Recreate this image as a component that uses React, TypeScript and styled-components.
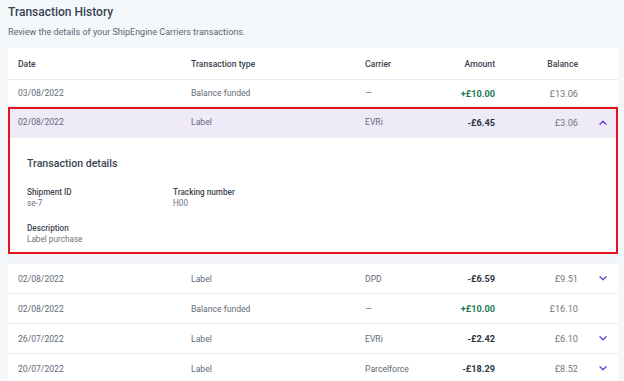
import React from 'react';
import styled, {createGlobalStyle} from 'styled-components';

const GlobalStyle = createGlobalStyle`
    html, body {
        margin: 0;
        padding: 0;
        background: #f5f8fb;
        font-family: 'Roboto', 'Inter', sans-serif;
    }
`;

const COLUMNS = '173px 174px 75px 65px 83px 30px';

const Page = styled.div`
    padding: 0 6px 0 8px;
    width: 624px;
    box-sizing: border-box;
`;

const Title = styled.h1`
    margin: 0;
    padding-top: 4px;
    font-size: 12px;
    font-weight: 500;
    color: #3a4452;
    line-height: 17px;
`;

const SubTitle = styled.p`
    margin: 5px 0 0 0;
    font-size: 9px;
    color: #5d6672;
    line-height: 12px;
`;

const Card = styled.div`
    margin-top: 10px;
    background: #ffffff;
`;

const Row = styled.div<{$height: number; $active?: boolean}>`
    display: grid;
    grid-template-columns: ${COLUMNS};
    align-items: center;
    height: ${p => p.$height}px;
    padding-left: 10px;
    box-sizing: border-box;
    border-bottom: 1px solid #e8ebef;
    background: ${p => (p.$active ? '#efeaf8' : '#ffffff')};
    font-size: 8.6px;
    color: #636b77;
`;

const Head = styled.span<{$align?: string}>`
    font-weight: 500;
    color: #3c4451;
    text-align: ${p => p.$align || 'left'};
    padding-right: ${p => (p.$align === 'right' ? '10px' : '0')};
`;

const Cell = styled.span`
    white-space: nowrap;
`;

const Amount = styled.span<{$positive?: boolean}>`
    text-align: right;
    padding-right: 10px;
    font-weight: 700;
    font-size: 9.2px;
    color: ${p => (p.$positive ? '#1d7a55' : '#2c3440')};
`;

const Balance = styled.span`
    text-align: right;
    padding-right: 10px;
    font-size: 9.2px;
    color: #707884;
`;

const Toggle = styled.span`
    display: flex;
    justify-content: center;
    align-items: center;
    color: #6b3fd4;
`;

const Highlight = styled.div`
    position: relative;
    outline: 2px solid #e3141b;
    outline-offset: -2px;
`;

const Details = styled.div`
    padding: 19px 0 10px 19px;
    background: #ffffff;
`;

const DetailsTitle = styled.h2`
    margin: 0 0 17px 0;
    font-size: 10.6px;
    font-weight: 500;
    color: #3a4452;
`;

const FieldGrid = styled.div`
    display: grid;
    grid-template-columns: 146px 146px;
    row-gap: 15px;
`;

const Field = styled.div`
    display: flex;
    flex-direction: column;
    gap: 1px;
`;

const FieldLabel = styled.span`
    font-size: 8.2px;
    font-weight: 500;
    color: #3f4753;
`;

const FieldValue = styled.span`
    font-size: 8.2px;
    color: #6c7480;
`;

const Spacer = styled.div`
    height: 10px;
    background: #f3f5f8;
`;

const Chevron = ({up}: {up?: boolean}) => (
    <svg width="8" height="5" viewBox="0 0 8 5" fill="none">
        <path
            d={up ? 'M1 4.2L4 1.2L7 4.2' : 'M1 0.8L4 3.8L7 0.8'}
            stroke="currentColor"
            strokeWidth="1.3"
            strokeLinecap="round"
            strokeLinejoin="round"
        />
    </svg>
);

type Tx = {
    date: string;
    type: string;
    carrier: string;
    amount: string;
    balance: string;
    positive?: boolean;
    expandable?: boolean;
};

const after: Tx[] = [
    {date: '02/08/2022', type: 'Label', carrier: 'DPD', amount: '-£6.59', balance: '£9.51', expandable: true},
    {date: '02/08/2022', type: 'Balance funded', carrier: '—', amount: '+£10.00', balance: '£16.10', positive: true},
    {date: '26/07/2022', type: 'Label', carrier: 'EVRi', amount: '-£2.42', balance: '£6.10', expandable: true},
    {date: '20/07/2022', type: 'Label', carrier: 'Parcelforce', amount: '-£18.29', balance: '£8.52', expandable: true},
];

const TxRow = ({tx, height, active}: {tx: Tx; height: number; active?: boolean}) => (
    <Row $height={height} $active={active}>
        <Cell>{tx.date}</Cell>
        <Cell>{tx.type}</Cell>
        <Cell>{tx.carrier}</Cell>
        <Amount $positive={tx.positive}>{tx.amount}</Amount>
        <Balance>{tx.balance}</Balance>
        <Toggle>{tx.expandable && <Chevron up={active} />}</Toggle>
    </Row>
);

export default function App() {
    return (
        <Page>
            <GlobalStyle />
            <Title>Transaction History</Title>
            <SubTitle>Review the details of your ShipEngine Carriers transactions.</SubTitle>
            <Card>
                <Row $height={32}>
                    <Head>Date</Head>
                    <Head>Transaction type</Head>
                    <Head>Carrier</Head>
                    <Head $align="right">Amount</Head>
                    <Head $align="right">Balance</Head>
                    <span />
                </Row>
                <TxRow
                    height={27}
                    tx={{date: '03/08/2022', type: 'Balance funded', carrier: '—', amount: '+£10.00', balance: '£13.06', positive: true}}
                />
                <Highlight>
                    <TxRow
                        height={31}
                        active
                        tx={{date: '02/08/2022', type: 'Label', carrier: 'EVRi', amount: '-£6.45', balance: '£3.06', expandable: true}}
                    />
                    <Details>
                        <DetailsTitle>Transaction details</DetailsTitle>
                        <FieldGrid>
                            <Field>
                                <FieldLabel>Shipment ID</FieldLabel>
                                <FieldValue>se-7</FieldValue>
                            </Field>
                            <Field>
                                <FieldLabel>Tracking number</FieldLabel>
                                <FieldValue>H00</FieldValue>
                            </Field>
                            <Field>
                                <FieldLabel>Description</FieldLabel>
                                <FieldValue>Label purchase</FieldValue>
                            </Field>
                        </FieldGrid>
                    </Details>
                </Highlight>
                <Spacer />
                {after.map((tx, i) => (
                    <TxRow key={i} tx={tx} height={30} />
                ))}
            </Card>
        </Page>
    );
}
